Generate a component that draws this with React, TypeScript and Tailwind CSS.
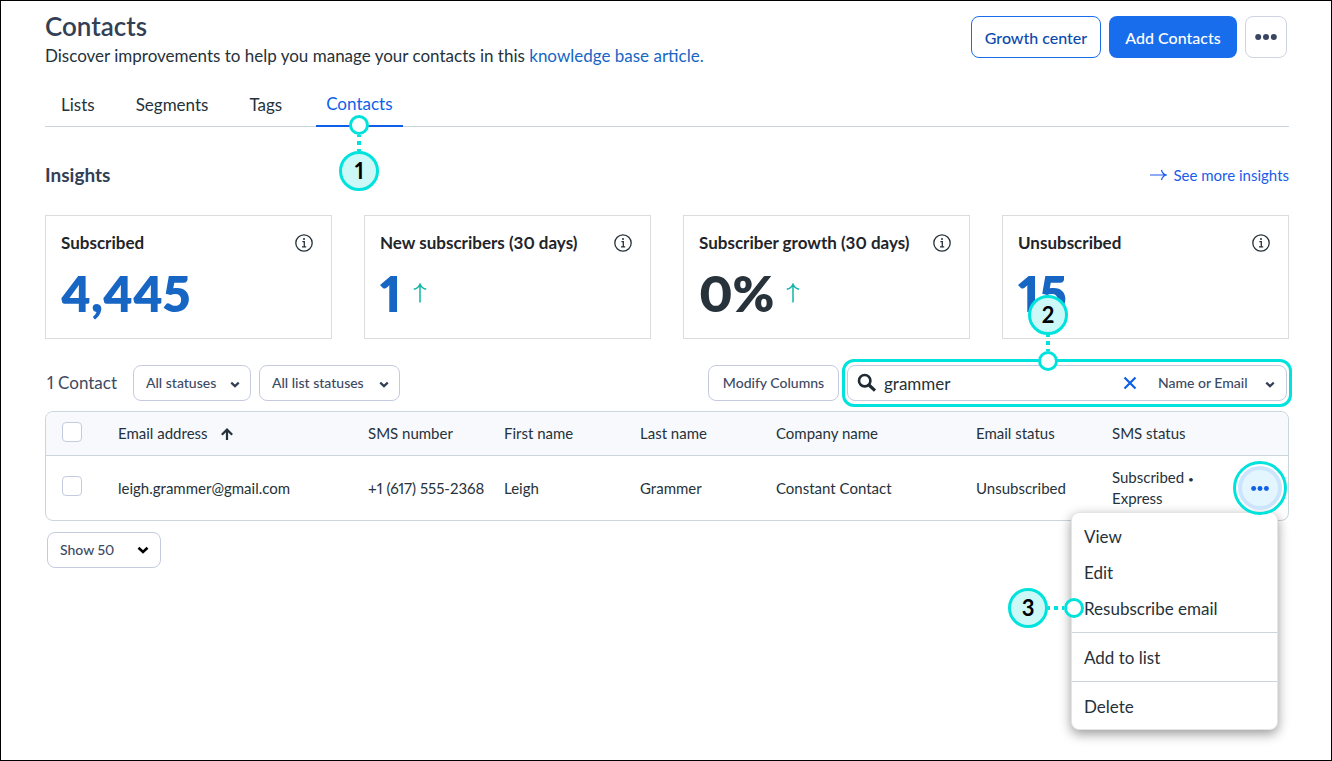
import type { ReactNode } from "react";

const insights = [
  { title: "Subscribed", value: "4,445", link: true, up: false },
  { title: "New subscribers (30 days)", value: "1", link: true, up: true },
  { title: "Subscriber growth (30 days)", value: "0%", link: false, up: true },
  { title: "Unsubscribed", value: "15", link: true, up: false },
];

function Dots({ className }: { className: string }) {
  return (
    <svg viewBox="0 0 22 6" fill="currentColor" className={className} aria-hidden="true">
      <circle cx="3.2" cy="3" r="3" />
      <circle cx="11" cy="3" r="3" />
      <circle cx="18.8" cy="3" r="3" />
    </svg>
  );
}

function Chevron({ className }: { className: string }) {
  return (
    <svg viewBox="0 0 12 8" fill="none" stroke="currentColor" className={className} aria-hidden="true">
      <path d="M1.5 1.8 L6 6 L10.5 1.8" strokeWidth="2.6" />
    </svg>
  );
}

function InfoIcon() {
  return (
    <svg viewBox="0 0 18 18" fill="none" stroke="currentColor" className="size-[18px]" aria-hidden="true">
      <circle cx="9" cy="9" r="8.2" strokeWidth="1.3" />
      <path d="M7.4 7.6h1.9v5.2M7 12.9h4.2" strokeWidth="1.3" />
      <circle cx="9" cy="4.9" r="1" fill="currentColor" stroke="none" />
    </svg>
  );
}

function UpArrow() {
  return (
    <svg viewBox="0 0 14 20" fill="none" stroke="currentColor" strokeWidth="1.5" className="h-5 w-3.5 text-[#12b5a5]" aria-hidden="true">
      <path d="M7 19.5V1.2M.8 6.200C3.600 5.500 6 3.600 7 1.200C8 3.600 10.400 5.500 13.200 6.200" />
    </svg>
  );
}

function StepBadge({ n }: { n: number }) {
  return (
    <span className="flex size-10 shrink-0 items-center justify-center rounded-full border-3 border-[#00e3dc] bg-[#ccf8f7] text-[22px] font-bold leading-none text-black">
      {n}
    </span>
  );
}

function StepDot() {
  return <span className="size-5 shrink-0 rounded-full border-3 border-[#00e3dc] bg-white" />;
}

function VerticalLink() {
  return <span className="h-4 w-1 bg-[repeating-linear-gradient(180deg,#00e3dc_0_2px,transparent_2px_6px,#00e3dc_6px_8px)]" />;
}

function Dropdown({ label, options, box, chevron }: { label: string; options: string[]; box: string; chevron: string }) {
  return (
    <div className="grid items-center">
      <select
        aria-label={label}
        className={`col-start-1 row-start-1 h-9 cursor-pointer appearance-none rounded-lg pl-3 font-medium text-[#3c4a63] ${box}`}
      >
        {options.map((o) => (
          <option key={o}>{o}</option>
        ))}
      </select>
      <Chevron className={`pointer-events-none col-start-1 row-start-1 justify-self-end ${chevron}`} />
    </div>
  );
}

function MenuItem({ children }: { children: ReactNode }) {
  return (
    <button type="button" role="menuitem" className="flex h-9 w-full items-center px-3 text-left text-[17px] text-[#26323a]">
      {children}
    </button>
  );
}

const th = "px-4 text-left font-normal";
const td = "px-4";
const box = "block size-5 appearance-none rounded border border-[#c5cbdf] bg-white";

export default function App() {
  return (
    <div className="min-h-screen border border-black bg-white pt-[15px] pr-[42px] pb-8 pl-11 font-['Lato','Open_Sans',sans-serif] text-[#26323a] proportional-nums">
      <header className="flex items-start justify-between">
        <div>
          <h1 className="text-[26px] leading-5 font-semibold text-[#333f55]">Contacts</h1>
          <p className="mt-2 text-[17px] leading-6">
            Discover improvements to help you manage your contacts in this{" "}
            <a href="#kb" className="text-[#1766c4]">knowledge base article.</a>
          </p>
        </div>
        <div className="flex gap-2">
          <button type="button" className="h-[42px] w-[130px] rounded-lg border border-[#186ded] pt-[2px] text-base font-medium text-[#0b49ad]">Growth center</button>
          <button type="button" className="h-[42px] w-32 rounded-lg bg-[#186ded] pt-[2px] text-base font-medium text-white">Add Contacts</button>
          <button type="button" aria-label="More actions" className="mr-[2px] flex h-[42px] w-[42px] items-center justify-center rounded-lg border border-[#cfd3e2] text-[#3a4560]">
            <Dots className="h-[6px] w-[22px]" />
          </button>
        </div>
      </header>

      <nav className="mt-[14px] flex h-[45px] border-b border-[#cbd5dc] text-[17px]">
        <a href="#lists" className="px-4 pt-[10px]">Lists</a>
        <a href="#segments" className="ml-[9px] px-4 pt-[10px]">Segments</a>
        <a href="#tags" className="ml-[9px] px-4 pt-[10px]">Tags</a>
        <a href="#contacts" aria-current="page" className="relative ml-[18px] -mb-px h-[45px] border-b-2 border-[#0e5fe8] px-[10px] pt-[9px] text-[#0e5fe8]">
          Contacts
          <span className="absolute top-[33px] left-1/2 flex -translate-x-1/2 flex-col items-center">
            <StepDot />
            <VerticalLink />
            <StepBadge n={1} />
          </span>
        </a>
      </nav>

      <section className="mt-9">
        <div className="flex h-6 items-center justify-between">
          <h2 className="text-[19px] font-bold text-[#333f55]">Insights</h2>
          <a href="#insights" className="flex items-center gap-[6px] text-[15px] text-[#1a5ce8]">
            <svg viewBox="0 0 17 12" fill="none" stroke="currentColor" strokeWidth="1.200" className="h-3 w-[17px]" aria-hidden="true">
              <path d="M0 6h16M11.500.8C12 3.500 13.500 5.300 16.200 6C13.500 6.700 12 8.500 11.500 11.200" />
            </svg>
            See more insights
          </a>
        </div>
        <div className="mt-7 grid grid-cols-4 gap-8">
          {insights.map((c) => (
            <article key={c.title} className="h-[124px] border border-[#dcdcdc] px-[15px] pt-[15px]">
              <div className="flex h-6 items-center justify-between">
                <h3 className="text-[17px] font-bold text-[#1f2529]">{c.title}</h3>
                <button type="button" aria-label={`About ${c.title}`} className="mr-[3px]">
                  <InfoIcon />
                </button>
              </div>
              <div className="mt-2 flex items-center gap-3">
                <span className={`text-[50px] leading-[60px] font-extrabold ${c.link ? "text-[#1766c4]" : "text-[#27323a]"}`}>{c.value}</span>
                {c.up && <UpArrow />}
              </div>
            </article>
          ))}
        </div>
      </section>

      <div className="mt-[26px] flex items-center gap-2 px-[2px]">
        <span className="w-[78px] text-[17px] leading-6 whitespace-nowrap text-[#3c4a63]">1 Contact</span>
        <Dropdown label="Status" options={["All statuses"]} box="w-[118px] border border-[#c5cbdf] text-sm" chevron="mt-[2px] mr-[11px] h-[7px] w-[10px] text-[#333f55]" />
        <Dropdown label="List status" options={["All list statuses"]} box="w-[141px] border border-[#c5cbdf] text-sm" chevron="mt-[2px] mr-[11px] h-[7px] w-[10px] text-[#333f55]" />
        <button type="button" className="ml-auto h-9 w-[131px] rounded-lg border border-[#c5cbdf] text-sm font-medium text-[#3c4a63]">Modify Columns</button>
        <div className="relative flex h-9 w-[440px] items-center rounded-lg border border-[#c5cbdf]">
          <svg viewBox="0 0 20 20" fill="none" stroke="currentColor" className="ml-[9px] size-5 text-[#1f2a33]" aria-hidden="true">
            <circle cx="7.700" cy="7.700" r="5.700" strokeWidth="2.600" />
            <path d="M12 12l6 5.600" strokeWidth="3.200" />
          </svg>
          <input aria-label="Search contacts" defaultValue="grammer" className="h-full min-w-0 flex-1 pl-[7px] text-[17px] outline-none" />
          <button type="button" aria-label="Clear search" className="text-[#0e5fe8]">
            <svg viewBox="0 0 14 14" fill="none" stroke="currentColor" strokeWidth="2.200" className="size-[14px]" aria-hidden="true">
              <path d="M1.500 1.500l11 11M12.500 1.500l-11 11" />
            </svg>
          </button>
          <Dropdown label="Search by" options={["Name or Email"]} box="ml-[9px] w-[140px] text-sm" chevron="mt-[2px] mr-[11px] h-[7px] w-[10px] text-[#333f55]" />
          <span className="pointer-events-none absolute -inset-x-[6px] -inset-y-[7px] rounded-xl border-3 border-[#00e3dc]" />
          <span className="pointer-events-none absolute bottom-[29px] left-[200px] flex -translate-x-1/2 flex-col items-center">
            <StepBadge n={2} />
            <VerticalLink />
            <StepDot />
          </span>
        </div>
      </div>

      <div className="mt-[10px] rounded-lg border border-[#cbd5dc]">
        <table className="w-full table-fixed border-separate border-spacing-0 text-[15px] leading-[21px]">
          <colgroup>
            <col className="w-14" />
            <col className="w-[250px]" />
            <col className="w-[136px]" />
            <col className="w-[136px]" />
            <col className="w-[136px]" />
            <col className="w-[200px]" />
            <col className="w-[136px]" />
            <col className="w-[136px]" />
            <col className="w-14" />
          </colgroup>
          <thead className="bg-[#f7f9fd]">
            <tr className="h-11 *:border-b *:border-[#cbd5dc]">
              <th className="rounded-tl-lg pb-1 pl-4"><input type="checkbox" aria-label="Select all" className={box} /></th>
              <th className={th}>
                <span className="flex items-center gap-[13px]">
                  Email address
                  <svg viewBox="0 0 12 12" fill="none" stroke="currentColor" strokeWidth="2.200" className="size-3" aria-hidden="true">
                    <path d="M6 12V1.800M.8 6.700L6 1.600L11.200 6.700" />
                  </svg>
                </span>
              </th>
              <th className={th}>SMS number</th>
              <th className={th}>First name</th>
              <th className={th}>Last name</th>
              <th className={th}>Company name</th>
              <th className={th}>Email status</th>
              <th className={th}>SMS status</th>
              <th className="rounded-tr-lg" aria-label="Actions" />
            </tr>
          </thead>
          <tbody>
            <tr className="h-16">
              <td className="pb-1 pl-4"><input type="checkbox" aria-label="Select leigh.grammer@gmail.com" className={box} /></td>
              <td className={td}>leigh.grammer@gmail.com</td>
              <td className="pl-4 whitespace-nowrap">+1 (617) 555-2368</td>
              <td className={td}>Leigh</td>
              <td className={td}>Grammer</td>
              <td className={td}>Constant Contact</td>
              <td className={td}>Unsubscribed</td>
              <td className={td}>Subscribed <span className="align-middle text-[10px] leading-none">•</span> Express</td>
              <td>
                <div className="relative flex justify-center">
                  <button type="button" aria-label="Row actions" aria-expanded="true" className="relative z-20 flex size-11 items-center justify-center rounded-full border-4 border-[#cde5fc] bg-[#e3f6ff] text-[#0e5fe8]">
                    <Dots className="h-[5px] w-[18px]" />
                    <span className="pointer-events-none absolute -inset-[9px] rounded-full border-3 border-[#00e3dc]" />
                  </button>
                  <div role="menu" className="absolute top-[46px] right-[10px] z-10 w-[207px] rounded-lg border border-[#e2e5e8] bg-white py-[5px] shadow-[0_4px_12px_rgba(0,0,0,0.4)]">
                    <MenuItem>View</MenuItem>
                    <MenuItem>Edit</MenuItem>
                    <div className="relative">
                      <MenuItem>Resubscribe email</MenuItem>
                      <span className="pointer-events-none absolute top-1/2 right-[193px] flex -translate-y-1/2 items-center">
                        <StepBadge n={3} />
                        <span className="h-1 w-4 bg-[repeating-linear-gradient(90deg,#00e3dc_0_2px,transparent_2px_6px,#00e3dc_6px_8px)]" />
                        <StepDot />
                      </span>
                    </div>
                    <hr className="my-[6px] border-[#cbd5dc]" />
                    <MenuItem>Add to list</MenuItem>
                    <hr className="my-[6px] border-[#cbd5dc]" />
                    <MenuItem>Delete</MenuItem>
                  </div>
                </div>
              </td>
            </tr>
          </tbody>
        </table>
      </div>

      <div className="mt-[11px] flex pl-[2px]">
        <Dropdown label="Rows per page" options={["Show 50"]} box="w-[114px] border border-[#c5cbdf] text-sm" chevron="mr-3 h-2 w-3 text-black" />
      </div>
    </div>
  );
}
